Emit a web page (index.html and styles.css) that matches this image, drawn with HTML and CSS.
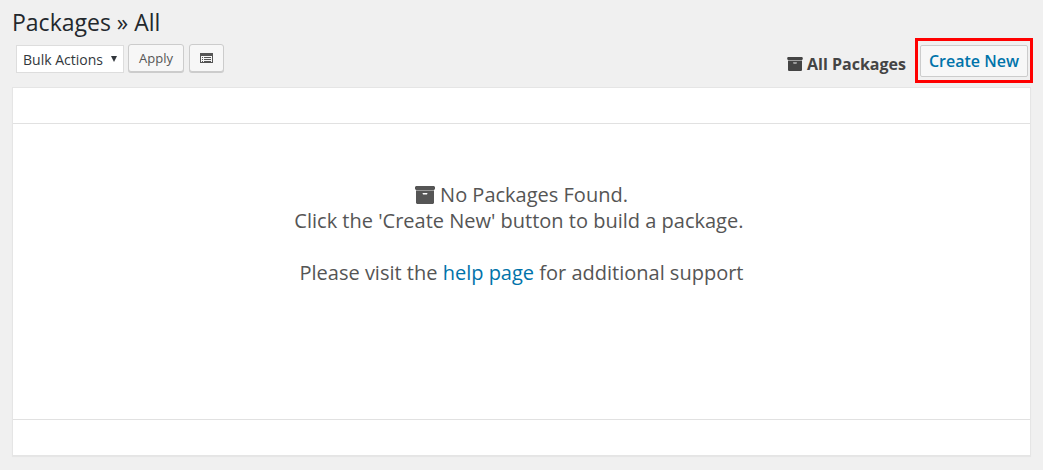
FILE: index.html
```html
<!DOCTYPE html>
<html lang="en">
<head>
	<meta charset="UTF-8">
	<title>Packages » All</title>
	<link rel="stylesheet" href="styles.css">
</head>
<body>
	<svg class="sprite" aria-hidden="true">
		<symbol id="archive" viewBox="0 0 20 18">
			<path d="M1 0h18l1 1v2l-1 1H1L0 3V1z"/>
			<path opacity=".6" d="M1 4h18v1H1z"/>
			<path fill-rule="evenodd" d="M1 5h18v12l-1 1H2l-1-1zM7.500 7l.5 1.500h4l.5-1.500z"/>
		</symbol>
	</svg>
	<div class="wrap">
		<h1>Packages » All</h1>
		<div class="toolbar">
			<form class="bulk">
				<label class="select">
					<select aria-label="Bulk Actions">
						<option>Bulk Actions</option>
						<option>Delete</option>
					</select>
					<svg class="arrow" viewBox="0 0 6 6"><path d="M0 0h6L3 6z"/></svg>
				</label>
				<button type="button" class="button">Apply</button>
				<button type="button" class="button" aria-label="Settings">
					<svg class="list-icon" viewBox="0 0 13 10">
						<path fill-rule="evenodd" d="M0 0h13v10H0zM1 3v6h11V3z"/>
						<path d="M2 4h1v1H2zM4 4h7v1H4zM2 6h1v1H2zM4 6h7v1H4zM2 8h1v1H2zM4 8h7v1H4z"/>
					</svg>
				</button>
			</form>
			<div class="nav">
				<span class="current"><svg class="archive"><use href="#archive"/></svg>All Packages</span>
				<a href="#new" class="create">Create New</a>
			</div>
		</div>
		<table class="packages">
			<thead>
				<tr><th></th></tr>
			</thead>
			<tbody>
				<tr>
					<td>
						<p><svg class="archive"><use href="#archive"/></svg>No Packages Found.<br>
						Click the 'Create New' button to build a package.&nbsp;</p>
						<p>Please visit the <a href="#help">help page</a> for additional support</p>
					</td>
				</tr>
			</tbody>
			<tfoot>
				<tr><th></th></tr>
			</tfoot>
		</table>
	</div>
</body>
</html>
```
FILE: styles.css
```css
*{
	box-sizing: border-box;
}
body{
	margin: 0;
	background: #f0f0f0;
	color: #444;
	font-family: "Open Sans", "Noto Sans", sans-serif;
	font-size: 13px;
}
a{
	color: #0073aa;
	text-decoration: none;
}
svg{
	fill: currentColor;
}
.sprite{
	display: none;
}
.wrap{
	padding: 8px 12px 12px;
}
h1{
	margin: 0;
	color: #23282d;
	font-size: 23px;
	font-weight: 400;
	line-height: 29px;
}
.toolbar{
	display: flex;
	justify-content: space-between;
	height: 50px;
	padding-top: 7px;
}
.bulk{
	display: flex;
	align-items: flex-start;
	gap: 5px;
	padding-left: 4px;
}
.select{
	position: relative;
	margin: 1px -1px 0 0;
}
.select select{
	display: block;
	width: 108px;
	height: 28px;
	padding: 0 6px;
	appearance: none;
	border: 1px solid #ddd;
	border-radius: 0;
	background: #fff;
	color: #32373c;
	font: 14px "Open Sans", sans-serif;
}
.arrow{
	position: absolute;
	top: 11px;
	right: 7px;
	width: 6px;
	height: 6px;
	color: #32373c;
	pointer-events: none;
}
.button{
	height: 28px;
	padding: 0 10px;
	border: 1px solid #ccc;
	border-radius: 3px;
	background: #f7f7f7;
	box-shadow: 0 1px 0 #ccc;
	color: #555;
	font: 13px "Open Sans", sans-serif;
}
.list-icon{
	display: block;
	width: 13px;
	height: 10px;
}
.nav{
	display: flex;
	align-items: flex-start;
	gap: 14px;
	padding: 1px 3px 0 0;
	font-size: 16px;
	font-weight: 600;
	line-height: 30px;
}
.current{
	padding-top: 4px;
	font-weight: 700;
}
.current .archive{
	width: 16px;
	height: 14px;
	margin-right: 4px;
	vertical-align: -1px;
}
.create{
	position: relative;
	padding: 0 8px;
	border: 1px solid #ccc;
	border-radius: 2px;
	background: #f7f7f7;
}
/* red frame round the button */
.create:after{
	content: '';
	position: absolute;
	inset: -8px -6px -7px;
	border: 3px solid #f00;
}
.packages{
	width: 100%;
	border: 1px solid #e5e5e5;
	border-spacing: 0;
	background: #fff;
	box-shadow: 0 1px 1px rgba(0,0,0,.04);
}
.packages th{
	height: 36px;
	padding: 0;
}
.packages thead th{
	border-bottom: 1px solid #e1e1e1;
}
.packages tfoot th{
	border-top: 1px solid #e1e1e1;
}
.packages td{
	height: 295px;
	padding: 58px 10px;
	color: #555;
	font-size: 20px;
	line-height: 26px;
	text-align: center;
	vertical-align: top;
}
.packages p{
	margin: 0 0 26px;
}
.packages .archive{
	width: 20px;
	height: 18px;
	margin-right: 5px;
	vertical-align: -2px;
}
```
